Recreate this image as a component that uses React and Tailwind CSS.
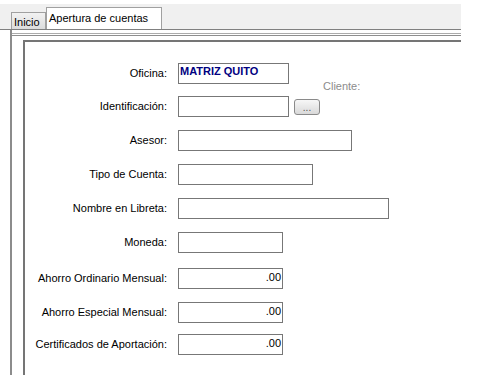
const rows = [
    { label: 'Oficina:', width: 'w-[111px]', value: 'MATRIZ QUITO', bold: true, mt: 'mt-0' },
    { label: 'Identificación:', width: 'w-[111px]', button: true, mt: 'mt-[12px]' },
    { label: 'Asesor:', width: 'w-[174px]', mt: 'mt-[13px]' },
    { label: 'Tipo de Cuenta:', width: 'w-[135px]', mt: 'mt-[13px]' },
    { label: 'Nombre en Libreta:', width: 'w-[211px]', mt: 'mt-[13px]' },
    { label: 'Moneda:', width: 'w-[105px]', mt: 'mt-[13px]' },
    { label: 'Ahorro Ordinario Mensual:', width: 'w-[105px]', value: '.00', mt: 'mt-[15px]' },
    { label: 'Ahorro Especial Mensual:', width: 'w-[105px]', value: '.00', mt: 'mt-[13px]' },
    { label: 'Certificados de Aportación:', width: 'w-[105px]', value: '.00', mt: 'mt-[11px]' },
];

function Field({ row }) {
    return (
        <div className={`flex h-[21px] items-center ${row.mt}`}>
            <span className="w-[142px] shrink-0 text-right leading-[13px] text-black">{row.label}</span>
            <div
                className={`ml-[11px] h-[21px] shrink-0 border border-[#777] bg-white leading-[13px] ${row.width} ${
                    row.bold ? 'px-[1px] pt-[1px] font-bold text-[#000080]' : 'pr-[1px] pt-[2px] text-right text-black'
                }`}
            >
                {row.value}
            </div>
            {row.button ? (
                <button
                    type="button"
                    className="ml-[5px] flex h-[16px] w-[26px] items-center justify-center rounded-[3px] border border-[#8a8a8a] bg-gradient-to-b from-[#f7f7f7] to-[#d9d9d9] pt-[2px] text-[10px] leading-[10px] text-[#555]"
                >
                    ...
                </button>
            ) : null}
            {row.bold ? (
                <span className="-mb-[9px] ml-[34px] self-end leading-[13px] text-[#8c8c8c]">Cliente:</span>
            ) : null}
        </div>
    );
}

export default function App() {
    return (
        <div className="h-[387px] w-[489px] overflow-hidden bg-white font-['Liberation_Sans',Arial,sans-serif] text-[11px]">
            <div className="mt-[4px] flex h-[26px] w-[461px] items-end border-b border-[#808080] bg-[#f0f0f0] pl-[11px]">
                <div className="flex h-[17px] w-[35px] items-center border border-b-0 border-[#a0a0a0] bg-gradient-to-b from-[#f2f2f2] to-[#dcdcdc] pl-[2px] pt-[2px] leading-[13px] text-black">
                    Inicio
                </div>
                <div className="flex h-[22px] w-[116px] items-start border border-b-0 border-[#a0a0a0] bg-white pl-[2px] pt-[4px] leading-[13px] text-black">
                    Apertura de cuentas
                </div>
            </div>

            <div className="ml-[10px] h-[345px] w-[451px] border-l-2 border-[#8c8c8c] pt-[3px]">
                <div className="h-full border-t border-[#ababab] pt-[1px]">
                    <div className="h-full border-t border-[#8e8e8e] pt-[4px]">
                        <div className="ml-[11px] h-full border-l-2 border-t-2 border-[#757575] pt-[21px]">
                            <div className="flex flex-col">
                                {rows.map((row) => (
                                    <Field key={row.label} row={row} />
                                ))}
                            </div>
                        </div>
                    </div>
                </div>
            </div>
        </div>
    );
}
